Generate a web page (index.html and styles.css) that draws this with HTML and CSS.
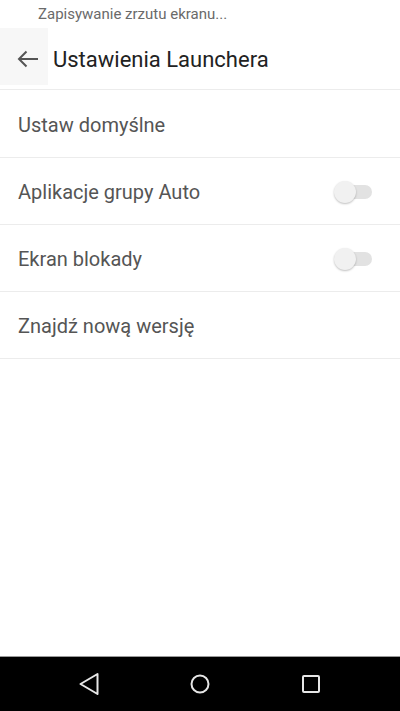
FILE: index.html
```html
<!DOCTYPE html>
<html lang="pl">
<head>
    <meta charset="UTF-8">
    <meta name="viewport" content="width=device-width, initial-scale=1.0">
    <title>Ustawienia Launchera</title>
    <link rel="stylesheet" href="styles.css">
</head>
<body>
    <div class="screen">
        <div class="status-bar">Zapisywanie zrzutu ekranu...</div>

        <div class="toolbar">
            <div class="back-button">
                <svg width="22" height="18" viewBox="0 0 22 18">
                    <path d="M21 9H2.5 M9.5 1.5 L2 9 L9.5 16.5" fill="none" stroke="#555" stroke-width="2"/>
                </svg>
            </div>
            <h1 class="title">Ustawienia Launchera</h1>
        </div>

        <ul class="settings-list">
            <li class="settings-item">Ustaw domyślne</li>
            <li class="settings-item">
                <span>Aplikacje grupy Auto</span>
                <span class="switch"><span class="switch-thumb"></span></span>
            </li>
            <li class="settings-item">
                <span>Ekran blokady</span>
                <span class="switch"><span class="switch-thumb"></span></span>
            </li>
            <li class="settings-item">Znajdź nową wersję</li>
        </ul>

        <div class="nav-bar">
            <svg width="24" height="24" viewBox="0 0 24 24">
                <path d="M20.5 2 L3.5 12 L20.5 22 Z" fill="none" stroke="#e6e6e6" stroke-width="2" stroke-linejoin="round"/>
            </svg>
            <svg width="24" height="24" viewBox="0 0 24 24">
                <circle cx="12" cy="12" r="8.5" fill="none" stroke="#e6e6e6" stroke-width="2"/>
            </svg>
            <svg width="24" height="24" viewBox="0 0 24 24">
                <rect x="4" y="4" width="16" height="16" rx="1" fill="none" stroke="#e6e6e6" stroke-width="2"/>
            </svg>
        </div>
    </div>
</body>
</html>
```

FILE: styles.css
```css
body {
    margin: 0;
    font-family: Roboto, "Noto Sans", sans-serif;
    background-color: #ffffff;
}
.screen {
    width: 400px;
    height: 711px;
    display: flex;
    flex-direction: column;
    overflow: hidden;
}
.status-bar {
    height: 28px;
    padding-left: 38px;
    padding-top: 1px;
    font-size: 15px;
    line-height: 26px;
    color: #6a6a6a;
    box-sizing: border-box;
}
.toolbar {
    height: 61px;
    display: flex;
    align-items: center;
    border-bottom: 1px solid #ececec;
}
.back-button {
    width: 48px;
    height: 57px;
    margin-top: -4px;
    display: flex;
    align-items: center;
    justify-content: center;
    background-color: #f7f7f7;
}
.back-button svg {
    margin-left: 8px;
    margin-top: 4px;
}
.title {
    margin: 2px 0 0 5px;
    font-size: 22px;
    font-weight: normal;
    color: #222;
}
.settings-list {
    list-style: none;
    margin: 0;
    padding: 0;
}
.settings-item {
    height: 67px;
    padding: 2px 28px 0 18px;
    display: flex;
    align-items: center;
    justify-content: space-between;
    border-bottom: 1px solid #ececec;
    font-size: 20px;
    color: #555;
    box-sizing: border-box;
}
.settings-item:first-child {
    height: 68px;
}
.switch {
    position: relative;
    width: 36px;
    height: 14px;
    border-radius: 7px;
    background-color: #e2e2e2;
}
/* bouton du switch, posé sur la piste */
.switch-thumb {
    position: absolute;
    left: -2px;
    top: -4px;
    width: 22px;
    height: 22px;
    border-radius: 50%;
    background-color: #f1f1f1;
    box-shadow: 0 1px 2px rgba(0, 0, 0, 0.25);
}
.nav-bar {
    margin-top: auto;
    height: 54px;
    background-color: #000;
    border-top: 1px solid #9a9a9a;
    display: flex;
    align-items: center;
    justify-content: space-between;
    padding: 0 77px;
}
```
